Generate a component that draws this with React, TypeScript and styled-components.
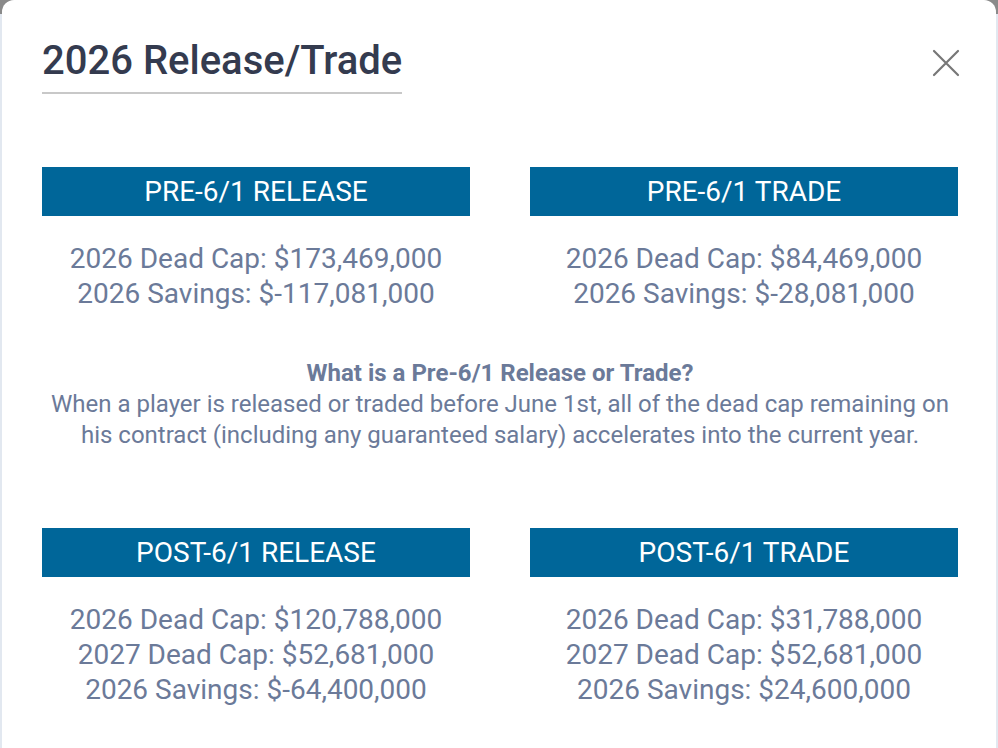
import React from "react";
import styled, { createGlobalStyle } from "styled-components";

const GlobalStyle = createGlobalStyle`
  html, body {
    margin: 0;
    padding: 0;
    background: #e2e8f0;
  }
  body {
    font-family: Roboto, "Liberation Sans", Arial, sans-serif;
  }
`;

const Backdrop = styled.div`
  width: 998px;
  height: 748px;
  overflow: hidden;
  background: linear-gradient(to bottom, #8a8a8a 0, #8a8a8a 14px, #e2e8f0 14px);
  padding-left: 2px;
  box-sizing: border-box;
`;

const Modal = styled.div`
  background: #fff;
  border-radius: 12px 12px 0 0;
  width: 994px;
  height: 760px;
  box-sizing: border-box;
  padding: 37px 38px 0 40px;
`;

const Header = styled.div`
  display: flex;
  justify-content: space-between;
  align-items: flex-start;
`;

const Title = styled.h2`
  margin: 0;
  font-size: 40px;
  font-weight: 500;
  line-height: 48px;
  color: #343b4f;
  padding-bottom: 7px;
  border-bottom: 2px solid #c8c8c8;
`;

const Close = styled.button`
  border: none;
  background: none;
  padding: 0;
  margin: 12px -2px 0 0;
  width: 28px;
  height: 28px;
  cursor: pointer;
`;

const Grid = styled.div`
  display: grid;
  grid-template-columns: 428px 428px;
  column-gap: 60px;
  margin-top: 73px;
`;

const Card = styled.div`
  display: flex;
  flex-direction: column;
  align-items: stretch;
`;

const Banner = styled.div`
  background: #006699;
  color: #fff;
  height: 49px;
  display: flex;
  align-items: center;
  justify-content: center;
  font-size: 28px;
  font-weight: 400;
  text-transform: uppercase;
`;

const Stats = styled.div`
  margin-top: 25px;
  text-align: center;
  color: #6b7a99;
  font-size: 28px;
  line-height: 35px;
`;

const Explainer = styled.div`
  text-align: center;
  color: #6b7a99;
  font-size: 24px;
  line-height: 31px;
  margin: 47px -10px 77px;
`;

const ExplainerTitle = styled.div`
  font-weight: 700;
`;

type Block = { title: string; lines: string[] };

const pre: Block[] = [
  {
    title: "Pre-6/1 Release",
    lines: ["2026 Dead Cap: $173,469,000", "2026 Savings: $-117,081,000"],
  },
  {
    title: "Pre-6/1 Trade",
    lines: ["2026 Dead Cap: $84,469,000", "2026 Savings: $-28,081,000"],
  },
];

const post: Block[] = [
  {
    title: "Post-6/1 Release",
    lines: [
      "2026 Dead Cap: $120,788,000",
      "2027 Dead Cap: $52,681,000",
      "2026 Savings: $-64,400,000",
    ],
  },
  {
    title: "Post-6/1 Trade",
    lines: [
      "2026 Dead Cap: $31,788,000",
      "2027 Dead Cap: $52,681,000",
      "2026 Savings: $24,600,000",
    ],
  },
];

const Row = ({ blocks }: { blocks: Block[] }) => (
  <Grid>
    {blocks.map((b) => (
      <Card key={b.title}>
        <Banner>{b.title}</Banner>
        <Stats>
          {b.lines.map((l) => (
            <div key={l}>{l}</div>
          ))}
        </Stats>
      </Card>
    ))}
  </Grid>
);

const App = () => {
  return (
    <Backdrop>
      <GlobalStyle />
      <Modal>
        <Header>
          <Title>2026 Release/Trade</Title>
          <Close aria-label="Close">
            <svg width="28" height="28" viewBox="0 0 28 28">
              <path
                d="M2 2 L26 26 M26 2 L2 26"
                stroke="#777"
                strokeWidth="2.2"
                strokeLinecap="round"
              />
            </svg>
          </Close>
        </Header>
        <Row blocks={pre} />
        <Explainer>
          <ExplainerTitle>What is a Pre-6/1 Release or Trade?</ExplainerTitle>
          When a player is released or traded before June 1st, all of the dead cap remaining on
          <br />
          his contract (including any guaranteed salary) accelerates into the current year.
        </Explainer>
        <Row blocks={post} />
      </Modal>
    </Backdrop>
  );
};

export default App;
